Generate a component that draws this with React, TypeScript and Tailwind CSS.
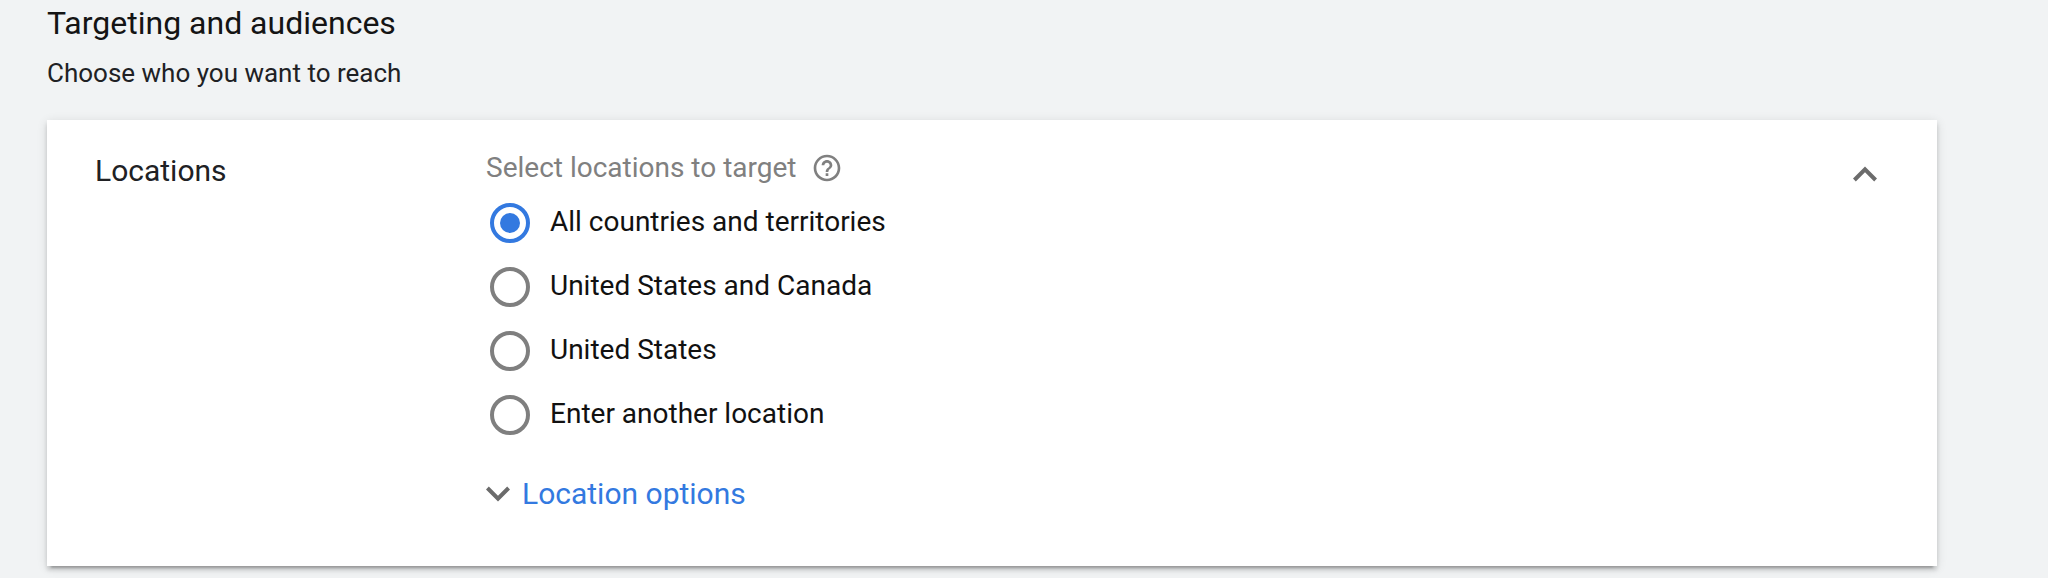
import { useState } from "react"
import { MdHelpOutline } from "react-icons/md"

const locations = [
  "All countries and territories",
  "United States and Canada",
  "United States",
  "Enter another location",
]

function Chevron({ up = false }: { up?: boolean }) {
  return (
    <svg viewBox="6 8 12 8" className="h-4 w-6 shrink-0 text-[#6b6b6b]" fill="currentColor" aria-hidden="true">
      {up ? (
        <path d="M12 8.3l-6 6 1.41 1.41L12 11.12l4.59 4.59L18 14.3z" />
      ) : (
        <path d="M16.59 8.3L12 12.88 7.41 8.3 6 9.71l6 6 6-6z" />
      )}
    </svg>
  )
}

export default function App() {
  const [selected, setSelected] = useState(locations[0])

  return (
    <main className="min-h-screen bg-[#f1f3f4] pb-3 pl-[47px] pr-[111px] pt-[3px] font-['Roboto',sans-serif] text-[#141414]">
      <h1 className="text-[32px] leading-10">Targeting and audiences</h1>
      <p className="mt-[14px] text-[26px] leading-8 text-[#202124]">Choose who you want to reach</p>

      <section className="mt-[31px] flex items-start bg-white pb-[54px] pl-12 pr-[60px] pt-8 shadow-[0_4px_4px_rgba(0,0,0,0.14),0_6px_2px_-4px_rgba(0,0,0,0.2),0_2px_10px_rgba(0,0,0,0.12)]">
        <h2 className="w-[391px] shrink-0 pt-px text-[30px] leading-9 text-[#202124]">Locations</h2>

        <div className="grow">
          <fieldset>
            <legend className="flex items-center gap-[14px] text-[28px] leading-8 text-[#808080]">
              Select locations to target
              <button type="button" aria-label="Help">
                <MdHelpOutline className="size-8" />
              </button>
            </legend>
            <div className="mt-[7px]">
              {locations.map((name) => (
                <label key={name} className="ml-1 flex h-16 items-center gap-5 text-[28px] leading-8 text-[#111111]">
                  <input
                    type="radio"
                    name="location"
                    checked={selected === name}
                    onChange={() => setSelected(name)}
                    className="grid size-10 shrink-0 appearance-none place-items-center rounded-full border-4 border-[#7f7f7f] before:size-5 before:rounded-full checked:border-[#3379e0] checked:before:bg-[#3379e0]"
                  />
                  <span className="pb-0.5">{name}</span>
                </label>
              ))}
            </div>
          </fieldset>

          <button type="button" className="mt-[29px] flex items-center gap-3 text-[30px] leading-9 text-[#3379e0]">
            <Chevron />
            Location options
          </button>
        </div>

        <button type="button" aria-label="Collapse" className="mt-[14px]">
          <Chevron up />
        </button>
      </section>
    </main>
  )
}
